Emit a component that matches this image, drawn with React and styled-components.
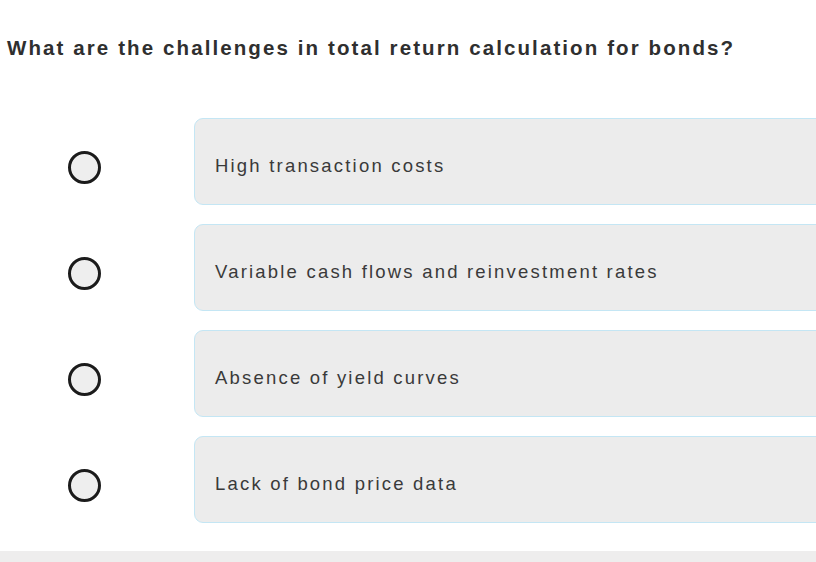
import React, { useState } from "react";
import styled, { createGlobalStyle } from "styled-components";

const options = [
	"High transaction costs",
	"Variable cash flows and reinvestment rates",
	"Absence of yield curves",
	"Lack of bond price data",
];

const GlobalStyle = createGlobalStyle`
	html, body {
		margin: 0;
		padding: 0;
		background: #fff;
		overflow: hidden;
	}
	body {
		font-family: "Liberation Sans", Arial, sans-serif;
	}
`;

function App() {
	const [selected, setSelected] = useState(null);

	return (
		<StyledQuiz>
			<GlobalStyle />
			<h1 className="question">
				What are the challenges in total return calculation for bonds?
			</h1>
			<div className="options">
				{options.map((text, i) => (
					<div
						key={i}
						className="option"
						onClick={() => {
							setSelected(i);
						}}>
						<div className="radio-cell">
							<Radio $checked={selected === i} />
						</div>
						<div className="answer">{text}</div>
					</div>
				))}
			</div>
			<div className="footer"></div>
		</StyledQuiz>
	);
}

const Radio = styled.span`
	display: block;
	width: 27px;
	height: 27px;
	border-radius: 50%;
	border: 3.5px solid #1b1b1b;
	background-color: ${(p) => (p.$checked ? "#1b1b1b" : "#eeeeee")};
`;

const StyledQuiz = styled.div`
	width: 816px;
	height: 562px;
	display: flex;
	flex-direction: column;
	color: #333;

	.question {
		margin: 36px 0 0 7px;
		font-size: 20.5px;
		line-height: 24px;
		letter-spacing: 2.1px;
		font-weight: 700;
		color: #2f2f2f;
	}

	.options {
		display: flex;
		flex-direction: column;
		gap: 19px;
		margin-top: 58px;
		margin-right: -30px;
	}

	.option {
		display: grid;
		grid-template-columns: 194px 1fr;
		cursor: pointer;
	}

	.radio-cell {
		display: flex;
		justify-content: center;
		padding-left: 8px;
		padding-top: 33px;
		box-sizing: border-box;
		width: 160px;
	}

	.answer {
		height: 87px;
		box-sizing: border-box;
		display: flex;
		align-items: center;
		padding: 8px 0 0 20px;
		background-color: #ececec;
		border: 1.5px solid #c4e6f4;
		border-radius: 9px;
		font-size: 18.5px;
		letter-spacing: 2.2px;
		color: #3a3a3a;
	}

	.footer {
		margin-top: auto;
		height: 11px;
		background-color: #eeeded;
	}
`;

export default App;
